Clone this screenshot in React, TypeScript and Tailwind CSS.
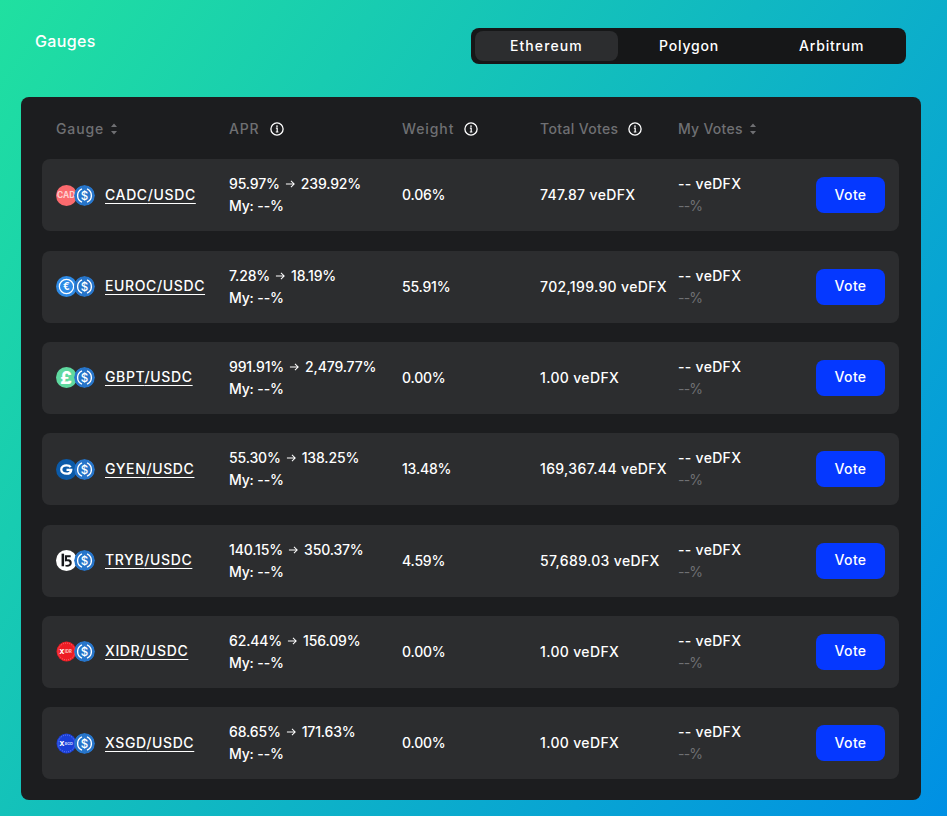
import React from "react";

function Usdc() {
  return (
    <svg viewBox="0 0 20 20" className="w-[21px] h-[21px] rounded-full relative -ml-[3px] shrink-0">
      <circle cx="10" cy="10" r="10" fill="#2775ca" />
      <path d="M7.6 3.600A7 7 0 0 0 7.6 16.4M12.4 3.600A7 7 0 0 1 12.4 16.4" fill="none" stroke="#fff" strokeWidth="1.3" />
      <text x="10" y="14" textAnchor="middle" fontSize="11" fontWeight="500" fill="#fff" fontFamily="Inter, sans-serif">$</text>
    </svg>
  );
}

function Token({ name }: { name: string }) {
  const common = "w-[21px] h-[21px] shrink-0";
  if (name === "CADC")
    return (
      <svg viewBox="0 0 20 20" className={common}>
        <circle cx="10" cy="10" r="10" fill="#fb6a6e" />
        <text x="9.6" y="12.8" textAnchor="middle" fontSize="8" fontWeight="700" fill="#ffd0d0" fontFamily="Inter, sans-serif">CAD</text>
      </svg>
    );
  if (name === "EUROC")
    return (
      <svg viewBox="0 0 20 20" className={common}>
        <circle cx="10" cy="10" r="10" fill="#2f8be6" />
        <circle cx="10" cy="10" r="6.800" fill="none" stroke="#fff" strokeWidth="1.200" />
        <text x="10" y="13.4" textAnchor="middle" fontSize="9.5" fontWeight="700" fill="#fff" fontFamily="Inter, sans-serif">€</text>
      </svg>
    );
  if (name === "GBPT")
    return (
      <svg viewBox="0 0 20 20" className={common}>
        <circle cx="10" cy="10" r="10" fill="#5fd9a0" />
        <text x="9.500" y="15.8" textAnchor="middle" fontSize="17" fontWeight="800" fill="#fff" fontFamily="Inter, sans-serif">£</text>
      </svg>
    );
  if (name === "GYEN")
    return (
      <svg viewBox="0 0 20 20" className={common}>
        <circle cx="10" cy="10" r="10" fill="#0b5aa8" />
        <path d="M14 7.800C13 6.300 11.500 6 10 6 7.500 6 5 7.500 5 10S7.500 14 10 14C12.500 14 14.300 12.700 14.500 10.300H10" fill="none" stroke="#fff" strokeWidth="2.200" />
      </svg>
    );
  if (name === "TRYB")
    return (
      <svg viewBox="0 0 20 20" className={common}>
        <circle cx="10" cy="10" r="10" fill="#fff" />
        <path d="M6.500 3.500V15.500" fill="none" stroke="#16171a" strokeWidth="2.400" />
        <path d="M8.500 5H14V7H10.500V9C13.500 8.500 15 10 15 12.300S12.500 16.500 9 15.800V14C11 14.500 13 14 13 12.300S11 10.300 8.500 11Z" fill="#16171a" />
      </svg>
    );
  if (name === "XIDR")
    return (
      <svg viewBox="0 0 20 20" className={common}>
        <circle cx="10" cy="10" r="9.500" fill="#ed1c24" />
        <circle cx="10" cy="10" r="8" fill="none" stroke="#ff9a9a" strokeWidth=".6" strokeDasharray="1 1" />
        <text x="3" y="12.300" fontSize="6.500" fontWeight="800" fill="#fff" fontFamily="Inter, sans-serif">X</text>
        <text x="8.400" y="11.800" fontSize="4" fontWeight="700" fill="#ffc9c9" fontFamily="Inter, sans-serif">IDR</text>
      </svg>
    );
  return (
    <svg viewBox="0 0 20 20" className={common}>
      <circle cx="10" cy="10" r="9.500" fill="#1a3fd8" />
      <circle cx="10" cy="10" r="8" fill="none" stroke="#8fa6ff" strokeWidth=".6" strokeDasharray="1 1" />
      <text x="3" y="12.300" fontSize="6.500" fontWeight="800" fill="#fff" fontFamily="Inter, sans-serif">X</text>
      <text x="8" y="11.800" fontSize="3.800" fontWeight="700" fill="#c9d4ff" fontFamily="Inter, sans-serif">SGD</text>
    </svg>
  );
}

function Info() {
  return (
    <svg viewBox="0 0 14 14" className="w-[14px] h-[14px] shrink-0">
      <circle cx="7" cy="7" r="6.100" fill="none" stroke="#fff" strokeWidth="1.300" />
      <path d="M5.900 6.200H7.200V10M5.800 10H8.400" fill="none" stroke="#fff" strokeWidth="1.200" />
      <circle cx="7" cy="4.100" r=".85" fill="#fff" />
    </svg>
  );
}

function Sort() {
  return (
    <svg viewBox="0 0 8 14" className="w-[8px] h-[14px] shrink-0">
      <path d="M4 1.500 7 5H1Z M4 12.500 1 9h6Z" fill="#6f7073" />
    </svg>
  );
}

const rows = [
  ["CADC", "95.97%", "239.92%", "0.06%", "747.87 veDFX"],
  ["EUROC", "7.28%", "18.19%", "55.91%", "702,199.90 veDFX"],
  ["GBPT", "991.91%", "2,479.77%", "0.00%", "1.00 veDFX"],
  ["GYEN", "55.30%", "138.25%", "13.48%", "169,367.44 veDFX"],
  ["TRYB", "140.15%", "350.37%", "4.59%", "57,689.03 veDFX"],
  ["XIDR", "62.44%", "156.09%", "0.00%", "1.00 veDFX"],
  ["XSGD", "68.65%", "171.63%", "0.00%", "1.00 veDFX"],
];

const grid = "grid grid-cols-[173px_173px_138px_138px_1fr] items-center";

export default function App() {
  return (
    <div className="h-[816px] w-full overflow-hidden bg-[linear-gradient(125deg,#20e0a0_0%,#0090e4_100%)] font-['Inter','Liberation_Sans',sans-serif] text-white pl-[21px] pr-[26px] pt-[28px]">
      <div className="flex justify-between items-start h-[69px] mr-[15px]">
        <h1 className="ml-[14px] mt-[2px] text-[16px] leading-[22px] font-medium tracking-[0.35px]">Gauges</h1>
        <div className="w-[435px] h-[36px] p-[3px] pl-[4px] rounded-[8px] bg-[#161718] grid grid-cols-3 text-[14px] font-medium tracking-[0.8px]">
          <div className="rounded-[8px] bg-[#2c2d2f] flex items-center justify-center pb-[2px] tracking-[1.1px]">Ethereum</div>
          <div className="flex items-center justify-center pb-[2px]">Polygon</div>
          <div className="flex items-center justify-center pb-[2px]">Arbitrum</div>
        </div>
      </div>
      <div className="w-[900px] h-[703px] bg-[#1c1d1f] rounded-[8px] pl-[21px] pr-[22px] pt-[21px]">
        <div className={`${grid} px-[14px] h-[20px] text-[14px] font-medium text-[#6f7073]`}>
          <div className="flex items-center gap-[6px] tracking-[0.9px]">Gauge <Sort /></div>
          <div className="flex items-center gap-[11px] tracking-[0.8px]">APR <Info /></div>
          <div className="flex items-center gap-[10px] tracking-[0.9px]">Weight <Info /></div>
          <div className="flex items-center gap-[10px] tracking-[0.35px]">Total Votes <Info /></div>
          <div className="flex items-center gap-[6px] tracking-[0.25px]">My Votes <Sort /></div>
        </div>
        <div className="mt-[21.3px] flex flex-col gap-[19.33px]">
          {rows.map(([name, from, to, weight, total]) => (
            <div key={name} className={`${grid} px-[14px] h-[72px] rounded-[8px] bg-[#2c2d2f] text-[14px] font-medium`}>
              <div className="flex items-center">
                <Token name={name} />
                <Usdc />
                <span className="ml-[10px] pb-[2px] underline underline-offset-[3px] tracking-[0.62px]">{name}/USDC</span>
              </div>
              <div className="leading-[22px] tracking-[-0.15px]">
                <div className="flex items-center gap-[5px]">
                  <span>{from}</span>
                  <svg viewBox="0 0 12 10" className="w-[11px] h-[10px]"><path d="M1 5h9M6.500 1.500 10 5 6.500 8.500" fill="none" stroke="#fff" strokeWidth="1.100" /></svg>
                  <span>{to}</span>
                </div>
                <div>My: --%</div>
              </div>
              <div className="pb-[1px] tracking-[-0.2px]">{weight}</div>
              <div className="pb-[1px] tracking-[0.35px]">{total}</div>
              <div className="flex items-center justify-between">
                <div className="leading-[22px]">
                  <div className="tracking-[0.3px]">-- veDFX</div>
                  <div className="text-[#6f7073] tracking-[-0.8px] font-normal">--%</div>
                </div>
                <button className="w-[69px] h-[36px] pb-[2px] rounded-[8px] bg-[#0538ff] text-[14px] font-medium tracking-[0.35px] text-white">Vote</button>
              </div>
            </div>
          ))}
        </div>
      </div>
    </div>
  );
}
